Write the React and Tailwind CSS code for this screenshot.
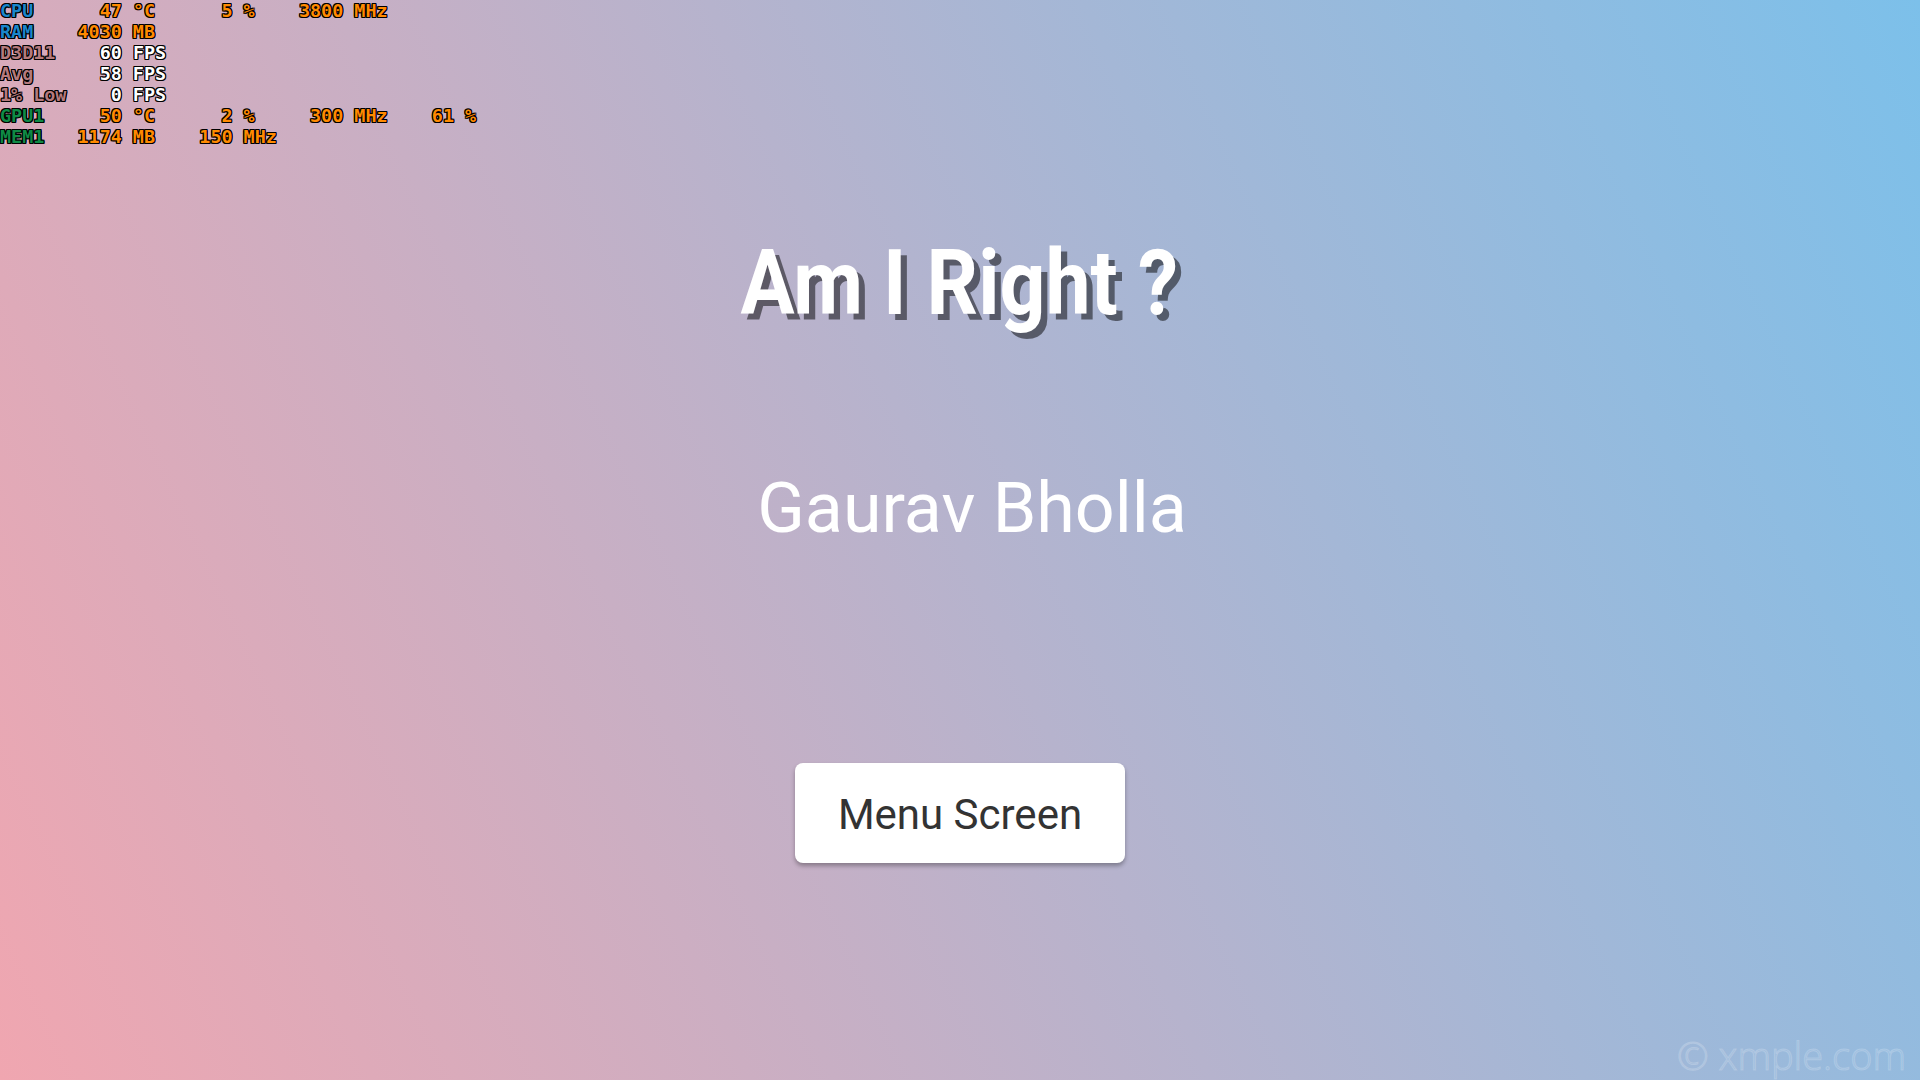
const outline = "[text-shadow:1px_1px_0_#000,-1px_-1px_0_#000,1px_-1px_0_#000,-1px_1px_0_#000,0_1px_0_#000,0_-1px_0_#000,1px_0_0_#000,-1px_0_0_#000]";

const blue = "text-[#1a86cc]";
const orange = "text-[#ff8a00]";
const rose = "text-[#b57a7c]";
const white = "text-white";
const green = "text-[#0f8a45]";

// each row is a list of [text, color]; spaces keep the monospace columns
const rows = [
    [["CPU", blue], ["      47 °C      5 %    3800 MHz", orange]],
    [["RAM", blue], ["    4030 MB", orange]],
    [["D3D11", rose], ["    60 FPS", white]],
    [["Avg", rose], ["      58 FPS", white]],
    [["1% Low", rose], ["    0 FPS", white]],
    [["GPU1", green], ["     50 °C      2 %     300 MHz    61 %", orange]],
    [["MEM1", green], ["   1174 MB    150 MHz", orange]],
];

const StatsOverlay = () => {
    return (
        <div className="absolute left-0 top-0 font-['DejaVu_Sans_Mono',monospace] font-bold text-[18.4px] leading-[21px]">
            {rows.map((row, i) => (
                <div key={i} className="whitespace-pre">
                    {row.map(([text, color], j) => (
                        <span key={j} className={`${color} ${outline}`}>{text}</span>
                    ))}
                </div>
            ))}
        </div>
    );
}

const App = () => {
    return (
        <div className="relative w-full h-[1080px] overflow-hidden bg-[linear-gradient(65deg,#f0a6b0,#7cc0ea)] font-['Roboto',sans-serif]">

            <StatsOverlay />

            <div className="flex flex-col items-center pt-[238px]">
                <h1 className="text-[91px] leading-none font-bold text-white mr-[2px] scale-x-[0.885] [text-shadow:7px_6px_0_rgba(0,0,0,0.5)]">
                    Am I Right ?
                </h1>

                <h2 className="mt-[144px] ml-6 text-[70px] leading-none font-normal text-white">
                    Gaurav Bholla
                </h2>

                <button className="mt-[220px] w-[330px] h-[100px] flex items-center justify-center pt-[3px] rounded-lg bg-white shadow-[0_3px_4px_rgba(0,0,0,0.3)] text-[42px] leading-none text-[#333333]">
                    Menu Screen
                </button>
            </div>

            <div className="absolute right-[14px] bottom-[6px] font-['Open_Sans',sans-serif] font-light text-[38px] leading-none text-white/5 [-webkit-text-stroke:1px_rgba(255,255,255,0.2)]">
                © xmple.com
            </div>
        </div>
    );
}

export default App;
